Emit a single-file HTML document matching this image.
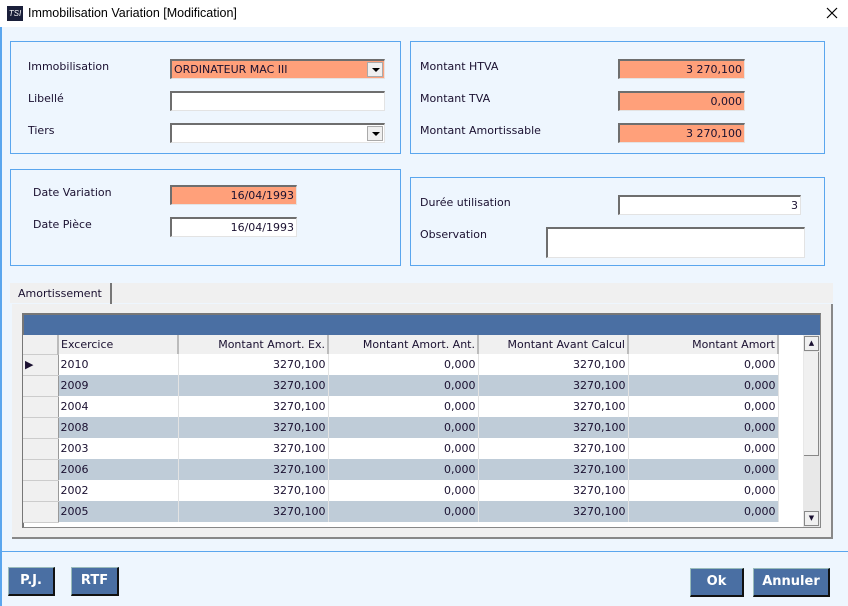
<!DOCTYPE html><html><head><style>
*{margin:0;padding:0;box-sizing:border-box}
body{width:848px;height:606px;background:#eef6fe;font-family:"DejaVu Sans",Verdana,sans-serif;font-size:11px;color:#1a1030;position:relative;overflow:hidden}
.a{position:absolute}
.box{position:absolute;border:1px solid #5aa6ee}
.lbl{position:absolute;font-size:11px;margin-top:1px}
.in{position:absolute;background:#fff;border-top:2px solid #6e6e6e;border-left:2px solid #6e6e6e;border-right:1px solid #e3e3e3;border-bottom:1px solid #e3e3e3;height:20px;text-align:right;padding-right:2px;line-height:17px;font-size:11px}
.or{background:#ffa07a}
.dd{position:absolute;right:1px;top:1px;width:16px;height:15px;background:#f0f0f0;border:1px solid #aaa}
.dd:after{content:"";position:absolute;left:4px;top:5px;border-left:4px solid transparent;border-right:4px solid transparent;border-top:4px solid #000}
.btn{position:absolute;background:#4a6fa3;color:#fff;font-weight:bold;font-size:13px;text-align:center;line-height:26px;border-right:2px solid #111;border-bottom:2px solid #111;border-top:1px solid #9bb;border-left:1px solid #9bb}
table{border-collapse:collapse;position:absolute;left:23px;top:335px;font-size:11px}
td{height:21px;padding:0 2px;border-right:1px solid #e3e3e3;white-space:nowrap}
td.r{text-align:right}
tr.h td{height:19px;background:#f0f0f0;border-right:2px solid #bbb}
tr.g td{background:#bfccd8}
td.s{background:#f0f0f0!important;border-right:1px solid #999;border-bottom:1px solid #ccc;width:35px}
</style></head><body>
<div class="a" style="left:0;top:0;width:848px;height:27px;background:#fff"></div>
<div class="a" style="left:7px;top:6px;width:16px;height:15px;background:#1a1f3a;color:#fff;font-size:8px;font-style:italic;line-height:15px;text-align:center;font-family:'Liberation Sans',sans-serif">TSI</div>
<div class="a" style="left:28px;top:6px;font-family:'Liberation Sans',sans-serif;font-size:12.5px;color:#000">Immobilisation Variation [Modification]</div>
<svg class="a" style="left:826px;top:7px" width="12" height="12"><path d="M1 1L11 11M11 1L1 11" stroke="#000" stroke-width="1.2"/></svg>
<div class="a" style="left:0;top:27px;width:2px;height:579px;background:#5aa6ee"></div>

<div class="box" style="left:10px;top:41px;width:391px;height:113px"></div>
<div class="lbl" style="left:28px;top:59px">Immobilisation</div>
<div class="in or" style="left:170px;top:59px;width:215px;text-align:left;padding-left:2px">ORDINATEUR MAC III<div class="dd"></div></div>
<div class="lbl" style="left:28px;top:91px">Libellé</div>
<div class="in" style="left:170px;top:91px;width:215px"></div>
<div class="lbl" style="left:28px;top:123px">Tiers</div>
<div class="in" style="left:170px;top:123px;width:215px"><div class="dd"></div></div>

<div class="box" style="left:410px;top:41px;width:415px;height:113px"></div>
<div class="lbl" style="left:420px;top:59px">Montant HTVA</div>
<div class="in or" style="left:618px;top:59px;width:127px">3 270,100</div>
<div class="lbl" style="left:420px;top:91px">Montant TVA</div>
<div class="in or" style="left:618px;top:91px;width:127px">0,000</div>
<div class="lbl" style="left:420px;top:123px">Montant Amortissable</div>
<div class="in or" style="left:618px;top:123px;width:127px">3 270,100</div>

<div class="box" style="left:10px;top:169px;width:391px;height:97px"></div>
<div class="lbl" style="left:33px;top:185px">Date Variation</div>
<div class="in or" style="left:170px;top:185px;width:127px">16/04/1993</div>
<div class="lbl" style="left:33px;top:217px">Date Pièce</div>
<div class="in" style="left:170px;top:217px;width:127px">16/04/1993</div>

<div class="box" style="left:410px;top:177px;width:415px;height:89px"></div>
<div class="lbl" style="left:420px;top:195px">Durée utilisation</div>
<div class="in" style="left:618px;top:195px;width:183px">3</div>
<div class="lbl" style="left:420px;top:227px">Observation</div>
<div class="in" style="left:546px;top:227px;width:259px;height:31px"></div>

<div class="a" style="left:10px;top:283px;width:823px;height:20px;background:#f0f0f0"></div>
<div class="a" style="left:12px;top:283px;width:100px;height:21px;border-right:2px solid #777;padding:4px 0 0 6px;font-size:11px">Amortissement</div>
<div class="a" style="left:12px;top:304px;width:821px;height:235px;background:#f0f0f0;border-bottom:2px solid #888;border-right:2px solid #888"></div>
<div class="a" style="left:22px;top:313px;width:799px;height:215px;background:#fff;border:1px solid #888;border-left:2px solid #777;border-top:2px solid #777"></div>
<div class="a" style="left:24px;top:315px;width:796px;height:20px;background:#4a6fa3"></div>
<table>
<tr class="h"><td class="s"></td><td style="width:120px">Excercice</td><td class="r" style="width:150px">Montant Amort. Ex.</td><td class="r" style="width:150px">Montant Amort. Ant.</td><td class="r" style="width:150px">Montant Avant Calcul</td><td class="r" style="width:150px">Montant Amort</td></tr>
<tr><td class="s">▶</td><td>2010</td><td class="r">3270,100</td><td class="r">0,000</td><td class="r">3270,100</td><td class="r">0,000</td></tr>
<tr class="g"><td class="s"></td><td>2009</td><td class="r">3270,100</td><td class="r">0,000</td><td class="r">3270,100</td><td class="r">0,000</td></tr>
<tr><td class="s"></td><td>2004</td><td class="r">3270,100</td><td class="r">0,000</td><td class="r">3270,100</td><td class="r">0,000</td></tr>
<tr class="g"><td class="s"></td><td>2008</td><td class="r">3270,100</td><td class="r">0,000</td><td class="r">3270,100</td><td class="r">0,000</td></tr>
<tr><td class="s"></td><td>2003</td><td class="r">3270,100</td><td class="r">0,000</td><td class="r">3270,100</td><td class="r">0,000</td></tr>
<tr class="g"><td class="s"></td><td>2006</td><td class="r">3270,100</td><td class="r">0,000</td><td class="r">3270,100</td><td class="r">0,000</td></tr>
<tr><td class="s"></td><td>2002</td><td class="r">3270,100</td><td class="r">0,000</td><td class="r">3270,100</td><td class="r">0,000</td></tr>
<tr class="g"><td class="s"></td><td>2005</td><td class="r">3270,100</td><td class="r">0,000</td><td class="r">3270,100</td><td class="r">0,000</td></tr>
</table>
<div class="a" style="left:803px;top:335px;width:17px;height:192px;background:#e8e8e8"></div>
<div class="a" style="left:804px;top:336px;width:15px;height:15px;background:#f0f0f0;border:1px solid #888;font-size:7px;text-align:center;line-height:13px">▲</div>
<div class="a" style="left:804px;top:352px;width:15px;height:104px;background:#f0f0f0;border-right:1px solid #888;border-bottom:1px solid #888"></div>
<div class="a" style="left:804px;top:511px;width:15px;height:15px;background:#f0f0f0;border:1px solid #888;font-size:7px;text-align:center;line-height:13px">▼</div>

<div class="a" style="left:2px;top:551px;width:846px;height:1px;background:#5aa6ee"></div>
<div class="btn" style="left:8px;top:567px;width:47px;height:29px">P.J.</div>
<div class="btn" style="left:71px;top:567px;width:48px;height:29px">RTF</div>
<div class="btn" style="left:690px;top:568px;width:54px;height:29px">Ok</div>
<div class="btn" style="left:753px;top:568px;width:77px;height:29px">Annuler</div>
</body></html>
